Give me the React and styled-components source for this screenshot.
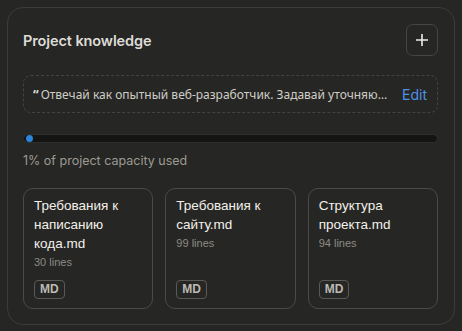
import styled, { createGlobalStyle } from "styled-components";

const Global = createGlobalStyle`
    html, body {
        margin: 0;
        padding: 0;
        background: #262624;
    }
    body {
        font-family: Inter, "Noto Sans", sans-serif;
        color: #e8e6e1;
    }
`;

const Page = styled.div`
    padding: 7px;
    width: 462px;
    height: 331px;
    box-sizing: border-box;
`;

const Panel = styled.div`
    border: 1px solid #3b3b38;
    border-radius: 16px;
    padding: 16px 16px 15px 15px;
    display: flex;
    flex-direction: column;
`;

const Header = styled.div`
    display: flex;
    align-items: center;
    justify-content: space-between;
    height: 32px;
`;

const Title = styled.h2`
    margin: 0;
    font-size: 14.5px;
    font-weight: 600;
    color: #dedcd6;
    letter-spacing: -0.1px;
`;

const AddButton = styled.button`
    width: 32px;
    height: 32px;
    border-radius: 7px;
    border: 1px solid #454542;
    background: transparent;
    color: #ecebe6;
    display: flex;
    align-items: center;
    justify-content: center;
    padding: 0;
`;

const Instructions = styled.div`
    margin-top: 19px;
    height: 38px;
    border: 1px dashed #44443f;
    border-radius: 8px;
    display: flex;
    align-items: center;
    padding: 0 10px 0 9px;
    box-sizing: border-box;
    gap: 10px;
`;

const Quote = styled.span`
    flex: 1;
    min-width: 0;
    font-size: 12px;
    color: #cfcdc6;
    white-space: nowrap;
    overflow: hidden;
    text-overflow: ellipsis;
    font-family: "Noto Sans", Inter, sans-serif;
`;

const Mark = styled.span`
    font-weight: 800;
    color: #dedcd6;
    margin-right: 2px;
`;

const EditLink = styled.span`
    color: #4f93e6;
    font-size: 14px;
`;

const Bar = styled.div`
    margin-top: 21px;
    height: 9px;
    border-radius: 5px;
    background: #141413;
    border: 1px solid #2f2f2d;
    display: flex;
    align-items: center;
    padding: 0 2px;
    box-sizing: border-box;
`;

const Fill = styled.div`
    height: 7px;
    border-radius: 4px;
    background: #2c84db;
`;

const Usage = styled.div`
    margin-top: 10px;
    font-size: 12.5px;
    color: #9c9a93;
`;

const Files = styled.div`
    margin-top: 20px;
    display: grid;
    grid-template-columns: repeat(3, 1fr);
    gap: 12px;
`;

const FileCard = styled.div`
    height: 121px;
    border: 1px solid #4a4a46;
    border-radius: 10px;
    padding: 7px 10px 9px 10px;
    box-sizing: border-box;
    display: flex;
    flex-direction: column;
    font-family: "Liberation Sans", Arial, sans-serif;
`;

const FileName = styled.div`
    font-size: 13.5px;
    line-height: 19px;
    color: #f2f0ea;
`;

const Lines = styled.div`
    margin-top: 3px;
    font-size: 11px;
    color: #8d8b85;
`;

const Badge = styled.span`
    margin-top: auto;
    align-self: flex-start;
    border: 1px solid #5a5955;
    border-radius: 4px;
    padding: 1px 5px;
    font-size: 12px;
    font-weight: 700;
    color: #bcbab3;
    line-height: 15px;
`;

const files = [
    { name: "Требования к написанию кода.md", lines: 30 },
    { name: "Требования к сайту.md", lines: 99 },
    { name: "Структура проекта.md", lines: 94 },
];

const App = () => {
    return (
        <Page>
            <Global />
            <Panel>
                <Header>
                    <Title>Project knowledge</Title>
                    <AddButton>
                        <svg width="14" height="14" viewBox="0 0 14 14">
                            <path d="M7 1v12M1 7h12" stroke="#ecebe6" strokeWidth="1.6" />
                        </svg>
                    </AddButton>
                </Header>
                <Instructions>
                    <Quote>
                        <Mark>“</Mark>Отвечай как опытный веб-разработчик. Задавай уточняющие вопросы
                    </Quote>
                    <EditLink>Edit</EditLink>
                </Instructions>
                <Bar>
                    <Fill style={{ width: "1.8%" }} />
                </Bar>
                <Usage>1% of project capacity used</Usage>
                <Files>
                    {files.map((f) => (
                        <FileCard key={f.name}>
                            <FileName>{f.name}</FileName>
                            <Lines>{f.lines} lines</Lines>
                            <Badge>MD</Badge>
                        </FileCard>
                    ))}
                </Files>
            </Panel>
        </Page>
    );
};

export default App;
